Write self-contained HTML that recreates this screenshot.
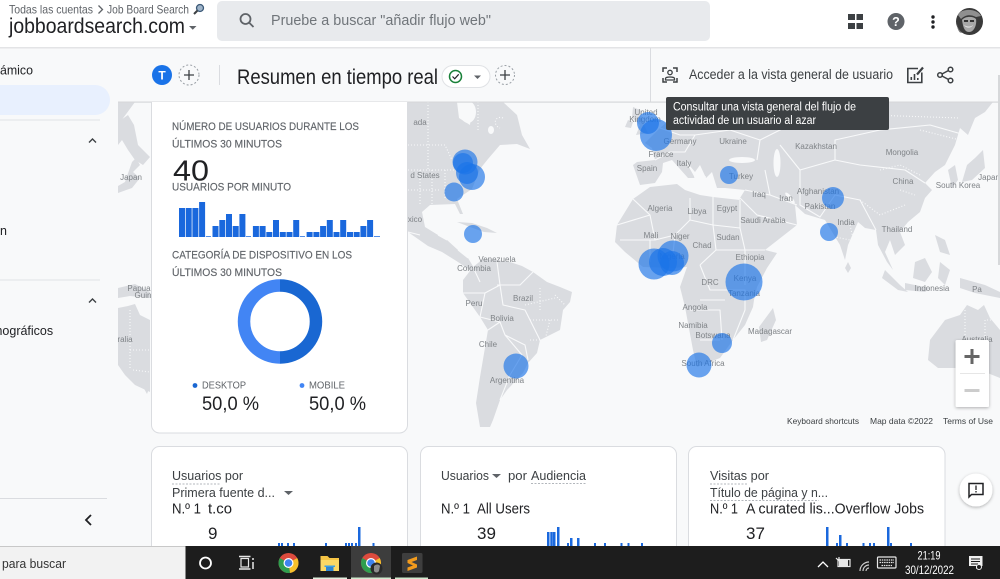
<!DOCTYPE html>
<html lang="es"><head><meta charset="utf-8"><title>Resumen en tiempo real</title>
<style>
html,body{margin:0;padding:0;width:1000px;height:579px;overflow:hidden;background:#f8f9fa}
svg{display:block}
text{font-family:"Liberation Sans",sans-serif}
.m text{font-size:8px;fill:#7f8387;text-anchor:middle}
.h{font-size:11px;fill:#5f6368;stroke:#5f6368;stroke-width:.15}
.d{fill:#202124}
</style></head><body>
<svg width="1000" height="579" viewBox="0 0 1000 579" xmlns="http://www.w3.org/2000/svg">
<defs>
<filter id="s" x="-30%" y="-30%" width="160%" height="160%"><feDropShadow dx="0" dy="1" stdDeviation="1.5" flood-color="#000" flood-opacity=".3"/></filter>
<clipPath id="mapc"><rect x="118" y="102" width="882" height="340"/></clipPath>
<clipPath id="cards"><rect x="0" y="440" width="1000" height="106"/></clipPath>
</defs>
<rect width="1000" height="579" fill="#f8f9fa"/>

<!-- MAP -->
<g clip-path="url(#mapc)">
<g fill="#dadce0">
<path d="M118 102H135L118 125Z"/>
<path d="M118 122L128 115 134 125 138 145 150 157 143 165 135 160 128 150 122 140 118 145Z"/>
<path d="M118 186L125 182 132 162 136 158 140 165 133 172 140 178 132 188 118 193Z"/>
<path d="M118 288L135 284 150 292V298L130 296 118 298Z"/>
<path d="M118 308L128 306 135 304 140 315 150 320V392L135 385 125 375 118 365Z"/>
<path d="M142 385L150 386 147 394Z"/>
<path d="M408 102H457L459 118 470 125 472 102H503L517 115 522 135 530 149 517 144 500 145 488 159 480 169 472 189 457 199 463 214 460 214 455 204 430 205 422 212 425 227 438 235 447 240 458 250 468 258 474 268 470 270 458 262 442 252 428 246 408 232Z"/>
<path d="M457 222L472 223 487 228 497 233 484 232 470 227Z"/>
<path d="M462 102H472L470 120 460 115Z" fill="#f8f9fa"/>
<path d="M463 280L473 267 483 259 497 260 510 262 522 266 533 272 547 282 560 287 572 292 570 302 563 310 560 330 540 340 537 353 528 363 523 373 507 390 500 400 493 420 490 427 480 427 476 403 480 377 488 330 480 317 463 293Z"/>
<path d="M617 225L633 199 650 187 677 184 685 190 700 195 713 197 740 200 753 227 765 250 777 253 767 268 757 287 754 300 753 307 745 325 733 340 720 358 697 367 693 350 685 307 680 287 687 267 672 268 643 267 625 252 615 242Z"/>
<path d="M773 308L776 320 767 340 761 342 759 327Z"/>
<path d="M633 165L637 162 655 160 652 148 645 143 660 128 672 118 685 112 680 102H993L985 112 975 118 968 135 960 128 955 145 945 165 935 172 925 183 932 190 925 198 920 212 908 222 900 232 905 245 895 255 890 240 885 252 893 270 887 262 878 245 876 230 865 228 858 222 848 245 845 260 840 245 825 220 805 214 795 205 797 225 765 250 757 253 748 235 738 210 740 198 745 190 725 188 717 188 712 172 706 178 700 165 695 172 685 160 695 178 688 178 672 160 663 163 662 172 655 183 640 185Z"/>
<path d="M633 107L640 110 644 125 648 133 636 135 640 125 632 118Z"/>
<path d="M628 120L633 122 631 128 625 127Z"/>
<path d="M967 165L975 158 983 150 985 168 972 180 962 182Z"/>
<path d="M948 170L955 165 958 180 952 188Z"/>
<path d="M897 205L900 210 897 222 893 215Z"/>
<path d="M848 262L851 268 848 273 845 268Z"/>
<path d="M885 270L900 285 908 292 898 290 882 278Z"/>
<path d="M905 283L930 288 925 292 905 290Z"/>
<path d="M915 262L925 258 932 272 925 282 913 278Z"/>
<path d="M940 262L950 270 945 285 938 278Z"/>
<path d="M935 235L945 240 950 255 940 252Z"/>
<path d="M960 278L985 285 1000 292 1000 298 975 293 960 288Z"/>
<path d="M930 340L945 320 960 315 967 305 978 310 984 305 990 318 1000 330V378L985 372 970 365 958 368 938 368 928 360Z"/>
</g>
<g fill="#f8f9fa">
<ellipse cx="742" cy="160" rx="13" ry="3"/>
<ellipse cx="777" cy="163" rx="3.500" ry="14"/>
<ellipse cx="700" cy="177" rx="6" ry="2"/>
<ellipse cx="790" cy="198" rx="2" ry="7" transform="rotate(-40 790 198)"/>
<ellipse cx="468" cy="112" rx="8" ry="11"/>
<ellipse cx="491" cy="130" rx="3" ry="4"/>
</g>
<g fill="none" stroke="#f8f9fa" stroke-width="1.100" stroke-linejoin="round">
<path d="M633 199L650 215 655 240 675 235 690 220 690 198M690 220L713 225 740 228 740 200M713 197V225M713 225L716 250 700 265M716 250H745L765 250M740 228L745 250 745 285M700 265L710 290 745 290 745 310 733 340M700 300H725M690 310H720L722 340M700 340H720M617 225L650 215M620 240L655 240M650 240L650 262M675 235L672 262"/>
<path d="M488 330L500 322 505 335 525 345 528 360M480 317L485 293 500 285 497 262M497 285L520 285 533 272M480 317L500 322M500 285L503 305 525 310 540 340M505 335L522 355 510 375 500 400M463 293L485 293M473 267L480 282"/>
<path d="M655 160L670 152 685 152 695 135 730 130 760 140 790 125 840 125 880 130 930 125 965 135M760 140L757 160M780 145L800 170 835 160 860 165 905 170 925 183M835 160L835 140 880 130M800 170L800 205 820 217 835 195 860 200 876 230M745 190L770 195 797 205M770 195L765 170M740 198L757 215 797 225M660 128L680 135 695 135"/>
<path d="M438 235L447 240M408 232L420 235M458 250L468 258"/>
</g>
<g fill="none" stroke="#f8f9fa" stroke-width="1.100" stroke-dasharray="1 2">
<path d="M408 170H455M428 102V170M478 102V130M408 145H445L452 160M408 190H440M432 170V205M420 170V205M445 170V200M503 118C495 115 492 125 500 128"/>
<path d="M540 288V310M525 305L555 298M530 320H560M550 320L545 340M555 295L565 305M530 340H555"/>
<path d="M850 225L858 260M825 235L850 240M880 170L900 165 920 175M900 190L915 195M860 200L880 215 905 205M920 130L960 140M870 115L960 118M1000 320L985 320V360M965 310V360"/>
<path d="M130 310V370M130 350H150M133 370L150 372"/>
</g>
<g class="m">
<text x="131" y="180">Japan</text><text x="139" y="291">Papua</text><text x="143" y="298">Guin</text><text x="125" y="342">ralia</text>
<text x="420" y="125">ada</text><text x="425" y="178">d States</text><text x="415" y="222">xico</text><text x="497" y="262">Venezuela</text><text x="474" y="271">Colombia</text>
<text x="474" y="306">Peru</text><text x="523" y="301">Brazil</text><text x="502" y="321">Bolivia</text><text x="488" y="347">Chile</text><text x="507" y="383">Argentina</text>
<text x="646" y="115">United</text><text x="645" y="122">Kingdom</text><text x="680" y="144">Germany</text><text x="661" y="157">France</text><text x="647" y="171">Spain</text><text x="684" y="166">Italy</text>
<text x="733" y="144">Ukraine</text><text x="816" y="149">Kazakhstan</text><text x="902" y="155">Mongolia</text><text x="741" y="179">Turkey</text><text x="903" y="184">China</text><text x="958" y="188">South Korea</text><text x="989" y="180">Japan</text>
<text x="759" y="197">Iraq</text><text x="786" y="201">Iran</text><text x="818" y="194">Afghanistan</text><text x="820" y="209">Pakistan</text><text x="846" y="225">India</text><text x="897" y="232">Thailand</text>
<text x="660" y="211">Algeria</text><text x="697" y="214">Libya</text><text x="727" y="211">Egypt</text><text x="763" y="223">Saudi Arabia</text><text x="651" y="238">Mali</text><text x="680" y="239">Niger</text><text x="702" y="248">Chad</text><text x="728" y="240">Sudan</text>
<text x="672" y="259">Nigeria</text><text x="750" y="260">Ethiopia</text><text x="710" y="285">DRC</text><text x="745" y="281">Kenya</text><text x="744" y="296">Tanzania</text>
<text x="695" y="310">Angola</text><text x="693" y="328">Namibia</text><text x="713" y="338">Botswana</text><text x="703" y="366">South Africa</text><text x="770" y="334">Madagascar</text><text x="932" y="291">Indonesia</text><text x="977" y="292">Pa</text><text x="977" y="342">Australia</text>
</g>
<g fill="#1a73e8" fill-opacity=".65">
<circle cx="465" cy="162" r="12.500"/><circle cx="463" cy="163" r="10"/><circle cx="467" cy="173" r="11"/><circle cx="472" cy="177" r="13"/><circle cx="454" cy="192" r="9.500"/><circle cx="473" cy="234" r="9"/>
<circle cx="648" cy="123" r="11"/><circle cx="656" cy="135" r="16"/><circle cx="729" cy="175" r="9"/><circle cx="833" cy="198" r="11"/><circle cx="829" cy="232" r="9"/>
<circle cx="673" cy="256" r="15.500"/><circle cx="672" cy="263" r="12"/><circle cx="654" cy="264" r="15.500"/><circle cx="663" cy="262" r="14"/><circle cx="744" cy="282" r="18.500"/>
<circle cx="516" cy="366" r="12.500"/><circle cx="699" cy="365" r="12.500"/><circle cx="722" cy="343" r="10"/>
</g>
</g>
<rect x="784" y="416" width="216" height="13" fill="#f8f9fa" fill-opacity=".8"/>
<g font-size="8.500" fill="#3c4043">
<text x="787" y="424" textLength="72" lengthAdjust="spacingAndGlyphs">Keyboard shortcuts</text>
<text x="870" y="424" textLength="63" lengthAdjust="spacingAndGlyphs">Map data ©2022</text>
<text x="943" y="424" textLength="50" lengthAdjust="spacingAndGlyphs">Terms of Use</text>
</g>
<rect x="955.500" y="340" width="33.500" height="67" rx="1.500" fill="#fff" filter="url(#s)"/>
<rect x="960" y="373" width="25" height="1" fill="#e6e6e6"/>
<path d="M964.500 356.500h15M972 349v15" stroke="#666" stroke-width="3"/>
<path d="M964.500 390.500h15" stroke="#ccc" stroke-width="3"/>

<!-- SIDEBAR -->
<rect x="0" y="48" width="118" height="498" fill="#f8f9fa"/>
<path d="M0 85H95A15 15 0 0 1 95 115H0Z" fill="#e8f0fe"/>
<rect x="0" y="119.500" width="100" height="1" fill="#e1e3e6"/>
<rect x="0" y="279.500" width="100" height="1" fill="#e1e3e6"/>
<rect x="0" y="498" width="107" height="1" fill="#dadce0"/>
<text x="0" y="74.500" font-size="12.500" class="d" textLength="33" lengthAdjust="spacingAndGlyphs">ámico</text>
<text x="-7" y="235" font-size="12.500" class="d">en</text>
<text x="-8" y="335" font-size="12.500" class="d">mográficos</text>
<path d="M89 142.500l3.500-3.500 3.500 3.500M89 302.500l3.500-3.500 3.500 3.500" fill="none" stroke="#3c4043" stroke-width="1.400"/>
<path d="M91 515l-5 5 5 5" fill="none" stroke="#202124" stroke-width="1.800"/>

<!-- HEADER -->
<rect width="1000" height="47" fill="#fff"/>
<rect y="47" width="1000" height="1.500" fill="#e3e4e6"/>
<text x="9" y="13.500" font-size="12" fill="#5f6368" textLength="84" lengthAdjust="spacingAndGlyphs">Todas las cuentas</text>
<path d="M98.500 5.500l4 4-4 4" fill="none" stroke="#5f6368" stroke-width="1.300"/>
<text x="107" y="13.500" font-size="12" fill="#5f6368" textLength="82" lengthAdjust="spacingAndGlyphs">Job Board Search</text>
<circle cx="200" cy="8" r="3.500" fill="#9fb4c9" stroke="#3c5a78" stroke-width="1.300"/><path d="M197.500 10.500l-3.500 3.500" stroke="#3c4043" stroke-width="2"/>
<text x="9" y="33" font-size="21" class="d" textLength="176" lengthAdjust="spacingAndGlyphs">jobboardsearch.com</text>
<path d="M189 26h7.500l-3.750 3.800z" fill="#5f6368"/>
<rect x="217" y="1" width="493" height="40" rx="5" fill="#e8eaed"/>
<circle cx="245.500" cy="19" r="5" fill="none" stroke="#5f6368" stroke-width="1.800"/><path d="M249 22.500l4.500 4.500" stroke="#5f6368" stroke-width="1.800"/>
<text x="271" y="25" font-size="14.500" fill="#70757a" textLength="220" lengthAdjust="spacingAndGlyphs">Pruebe a buscar "añadir flujo web"</text>
<g fill="#3c4043"><rect x="848" y="14" width="7" height="6"/><rect x="856.500" y="14" width="6.500" height="6"/><rect x="848" y="23" width="7" height="6"/><rect x="856.500" y="23" width="6.500" height="6"/></g>
<circle cx="896" cy="21.500" r="8.500" fill="#5f6368"/>
<text x="896" y="26" font-size="12.500" font-weight="bold" fill="#fff" text-anchor="middle">?</text>
<g fill="#202124"><circle cx="933" cy="17" r="1.700"/><circle cx="933" cy="22" r="1.700"/><circle cx="933" cy="27" r="1.700"/></g>
<circle cx="969.500" cy="21.500" r="13.500" fill="#3a3a3a"/>
<path d="M958 15C961 8 977 8 981 16L976 17C970 14 965 15 961 19Z" fill="#8f8f8f"/>
<path d="M962 20C965 16 973 16 976 19 977 25 974 32 969 32 964 32 963 26 962 20Z" fill="#a8a8a8"/>
<path d="M964 25c3 2 7 2 9 0-1 3-7 4-9 0Z" fill="#e0e0e0"/>
<path d="M964 20h4v2h-4zM970 20h4v2h-4z" fill="#333"/>
<path d="M957 24c1 5 3 7 6 9l-3-.5c-2-2-3-5-3-8.500Z" fill="#777"/>

<!-- SUBHEADER -->
<circle cx="162" cy="75" r="10" fill="#1a73e8"/>
<text x="162" y="79.500" font-size="12" font-weight="bold" fill="#fff" text-anchor="middle">T</text>
<circle cx="189" cy="75" r="10" fill="none" stroke="#9aa0a6" stroke-dasharray="2 2"/>
<path d="M184 75h10M189 70v10" stroke="#3c4043" stroke-width="1.300"/>
<rect x="219" y="65" width="1" height="20" fill="#dadce0"/>
<text x="237" y="84" font-size="21" class="d" textLength="201" lengthAdjust="spacingAndGlyphs">Resumen en tiempo real</text>
<rect x="442" y="65.500" width="48" height="22" rx="11" fill="#fff" stroke="#e0e2e5"/>
<circle cx="455.500" cy="76.500" r="6" fill="none" stroke="#188038" stroke-width="1.500"/>
<path d="M452.500 76.500l2.200 2.300 4-4.500" fill="none" stroke="#202124" stroke-width="1.200"/>
<path d="M474 75.500h7l-3.500 3.500z" fill="#5f6368"/>
<circle cx="505" cy="75" r="9.500" fill="none" stroke="#9aa0a6" stroke-dasharray="2 2"/>
<path d="M500 75h10M505 70v10" stroke="#3c4043" stroke-width="1.300"/>
<rect x="650" y="48" width="1" height="54" fill="#dadce0"/>
<rect x="118" y="101.500" width="882" height="1.200" fill="#d6d8da"/>
<g fill="none" stroke="#3c4043" stroke-width="1.300">
<path d="M663 72v-4h4M673 68h4v4M663 78v4h4M673 82h4v-4" stroke-width="1.500"/>
<circle cx="670" cy="72.500" r="2.200"/>
<path d="M665.500 80v-1.500c0-2 9-2 9 0V80Z"/>
</g>
<text x="689" y="79" font-size="13.500" fill="#3c4043" textLength="204" lengthAdjust="spacingAndGlyphs">Acceder a la vista general de usuario</text>
<g fill="none" stroke="#3c4043" stroke-width="1.600">
<path d="M918 68.500h-10.200v14h14v-10"/>
<path d="M917 74.500l6-7" stroke-width="2.200"/>
</g>
<path d="M910.500 80h1.600v-3h-1.600zM913.700 80h1.600v-6h-1.600zM917 80h1.600v-2h-1.600z" fill="#3c4043"/>
<g fill="none" stroke="#3c4043" stroke-width="1.500">
<circle cx="950.500" cy="69.500" r="2.300"/><circle cx="940" cy="75" r="2.300"/><circle cx="950.500" cy="80.500" r="2.300"/>
<path d="M942 74l6.500-3.500M942 76l6.500 3.500"/>
</g>

<!-- MAIN CARD -->
<path d="M151.500 102V425a8 8 0 0 0 8 8H399.500a8 8 0 0 0 8-8V102" fill="#fff" stroke="#dadce0"/>
<text class="h" x="172" y="130" textLength="187" lengthAdjust="spacingAndGlyphs">NÚMERO DE USUARIOS DURANTE LOS</text>
<text class="h" x="172" y="147.500" textLength="110" lengthAdjust="spacingAndGlyphs">ÚLTIMOS 30 MINUTOS</text>
<text x="173" y="180.500" font-size="29" class="d" textLength="36" lengthAdjust="spacingAndGlyphs">40</text>
<text class="h" x="172" y="190.500" textLength="119" lengthAdjust="spacingAndGlyphs">USUARIOS POR MINUTO</text>
<path fill="#1a68dd" d="M179 208h6v29h-6zM185.700 208h6v29h-6zM192.400 208h6v29h-6zM199.100 202h6v35h-6zM205.900 236.300h5v.7h-5zM212.500 226h6v11h-6zM219.300 220h6v17h-6zM226 214h6v23h-6zM232.700 226h6v11h-6zM239.400 214h6v23h-6zM246 236.300h5v.7h-5zM252.900 226h6v11h-6zM259.600 226h6v11h-6zM266.300 232h6v5h-6zM273 220h6v17h-6zM279.800 232h6v5h-6zM286.500 232h6v5h-6zM293.200 220h6v17h-6zM300 236.300h5v.7h-5zM306.600 232h6v5h-6zM313.400 232h6v5h-6zM320.100 226h6v11h-6zM326.800 220h6v17h-6zM333.500 232h6v5h-6zM340.200 220h6v17h-6zM347 232h6v5h-6zM353.700 232h6v5h-6zM360.400 226h6v11h-6zM367.100 220h6v17h-6zM374 236.300h6v.7h-6z"/>
<text class="h" x="172" y="258.500" textLength="180" lengthAdjust="spacingAndGlyphs">CATEGORÍA DE DISPOSITIVO EN LOS</text>
<text class="h" x="172" y="276" textLength="110" lengthAdjust="spacingAndGlyphs">ÚLTIMOS 30 MINUTOS</text>
<path d="M280 285.500a36 36 0 0 1 0 72" fill="none" stroke="#1967d2" stroke-width="12.500"/>
<path d="M280 357.500a36 36 0 0 1 0-72" fill="none" stroke="#4285f4" stroke-width="12.500"/>
<circle cx="195" cy="385.500" r="2.400" fill="#1967d2"/>
<text x="202" y="388.500" font-size="10" fill="#5f6368" textLength="44" lengthAdjust="spacingAndGlyphs">DESKTOP</text>
<circle cx="302" cy="385.500" r="2.400" fill="#4285f4"/>
<text x="309" y="388.500" font-size="10" fill="#5f6368" textLength="36" lengthAdjust="spacingAndGlyphs">MOBILE</text>
<text x="202" y="410" font-size="19" class="d" textLength="57" lengthAdjust="spacingAndGlyphs">50,0 %</text>
<text x="309" y="410" font-size="19" class="d" textLength="57" lengthAdjust="spacingAndGlyphs">50,0 %</text>

<!-- BOTTOM CARDS -->
<g clip-path="url(#cards)">
<rect x="151.500" y="446.500" width="256" height="140" rx="8" fill="#fff" stroke="#dadce0"/>
<rect x="420.500" y="446.500" width="256" height="140" rx="8" fill="#fff" stroke="#dadce0"/>
<rect x="688.500" y="446.500" width="256.500" height="140" rx="8" fill="#fff" stroke="#dadce0"/>
<g font-size="13" fill="#3c4043">
<text x="172" y="480" textLength="71" lengthAdjust="spacingAndGlyphs">Usuarios por</text>
<text x="172" y="497" textLength="103" lengthAdjust="spacingAndGlyphs">Primera fuente d...</text>
<text x="441" y="480" textLength="48" lengthAdjust="spacingAndGlyphs">Usuarios</text>
<text x="508" y="480" textLength="19" lengthAdjust="spacingAndGlyphs">por</text>
<text x="531" y="480" textLength="55" lengthAdjust="spacingAndGlyphs">Audiencia</text>
<text x="710" y="480" textLength="59" lengthAdjust="spacingAndGlyphs">Visitas por</text>
<text x="710" y="497" textLength="118" lengthAdjust="spacingAndGlyphs">Título de página y n...</text>
</g>
<g stroke="#9aa0a6" stroke-dasharray="2 1.500" stroke-width=".8">
<path d="M172 484h49M531 483.500h55M710 484h37M710 500.500h109"/>
</g>
<path d="M284 491h9l-4.500 4zM492 474h9l-4.500 4z" fill="#5f6368"/>
<g font-size="14.500" class="d">
<text x="172" y="513.500" textLength="29" lengthAdjust="spacingAndGlyphs">N.º 1</text>
<text x="208" y="513.500" textLength="24" lengthAdjust="spacingAndGlyphs">t.co</text>
<text x="441" y="513.500" textLength="29" lengthAdjust="spacingAndGlyphs">N.º 1</text>
<text x="477" y="513.500" textLength="53" lengthAdjust="spacingAndGlyphs">All Users</text>
<text x="710" y="513.500" textLength="28" lengthAdjust="spacingAndGlyphs">N.º 1</text>
<text x="746" y="513.500" textLength="178" lengthAdjust="spacingAndGlyphs">A curated lis...Overflow Jobs</text>
</g>
<g font-size="17" class="d">
<text x="208" y="539">9</text>
<text x="477" y="539">39</text>
<text x="746" y="539">37</text>
</g>
<path fill="#1a68dd" d="M278 543h2v3h-2zM281 543h2v3h-2zM287 543h2v3h-2zM293 543h2v3h-2zM325 543h2v3h-2zM345 543h2v3h-2zM348 543h2v3h-2zM351 543h2v3h-2zM355 543h2v3h-2zM358 527h2.500v19h-2.500zM372.500 543h2v3h-2z"/>
<path fill="#1a68dd" d="M547 532h2.500v14h-2.500zM550.300 532h2.500v14h-2.500zM553 532h2.500v14h-2.500zM557 527h2.500v19h-2.500zM567 543h2v3h-2zM570 538h2.500v8h-2.500zM577 538h2.500v8h-2.500zM594 543h2v3h-2zM604 543h2v3h-2zM620.500 543h2v3h-2zM627.500 543h2v3h-2zM641 543h2v3h-2z"/>
<path fill="#1a68dd" d="M826 527h2.500v19h-2.500zM836 543h2v3h-2zM839 535h2.500v11h-2.500zM846 543h2v3h-2zM862.500 543h2v3h-2zM869 543h2v3h-2zM873 543h2v3h-2zM887 527h2.500v19h-2.500zM890 543h2v3h-2zM910 543h2v3h-2z"/>
</g>

<!-- tooltip -->
<rect x="666" y="97" width="223" height="33" rx="2" fill="#3c4043"/>
<g font-size="11.500" fill="#fff">
<text x="673" y="110.500" textLength="183" lengthAdjust="spacingAndGlyphs">Consultar una vista general del flujo de</text>
<text x="673" y="124" textLength="143" lengthAdjust="spacingAndGlyphs">actividad de un usuario al azar</text>
</g>

<rect x="998" y="75" width="2" height="190" fill="#d6d8da"/>

<!-- feedback -->
<circle cx="976" cy="490" r="16.500" fill="#fff" filter="url(#s)"/>
<path d="M969 483.500h14v11h-11.500l-2.500 2.500Z" fill="none" stroke="#202124" stroke-width="1.500"/>
<path d="M976 485.500v4.500M976 491v1.500" stroke="#202124" stroke-width="1.300"/>

<!-- TASKBAR -->
<rect y="546" width="1000" height="33" fill="#1d1d1d"/>
<rect y="546" width="185.500" height="33" fill="#f2f2f2"/>
<rect y="546" width="185.500" height="1" fill="#c8c8c8"/>
<text x="2" y="568" font-size="13" fill="#333" textLength="64" lengthAdjust="spacingAndGlyphs">para buscar</text>
<circle cx="205.500" cy="563" r="5.500" fill="none" stroke="#fff" stroke-width="1.800"/>
<g fill="none" stroke="#e8e8e8" stroke-width="1.200"><rect x="241" y="558.500" width="7.500" height="8.500"/><path d="M239 556.500h11.500M239 569h11.500M253 558v2M253 562v7" stroke-width="1.500"/></g>
<circle cx="288.500" cy="563" r="10" fill="#dd4b3e"/>
<path d="M288.500 563L297.200 558A10 10 0 0 1 290 572.900Z" fill="#f6c02c"/>
<path d="M288.500 563L290 572.900A10 10 0 0 1 279.800 558Z" fill="#2e9e4f"/>
<circle cx="288.500" cy="563" r="5" fill="#fff"/><circle cx="288.500" cy="563" r="3.800" fill="#3f84ee"/>
<path d="M320.500 556h7l2 2h9.500v13h-18.500Z" fill="#f5c445"/>
<rect x="320.500" y="560" width="18.500" height="11" fill="#fbd865"/>
<path d="M326 571v-5h7.500v5Z" fill="#2f86d2"/><path d="M324.500 565.500h10.500v1.500h-10.500Z" fill="#3aa0e6"/>
<rect x="351" y="546" width="40" height="33" fill="#3d3d3d"/>
<circle cx="371" cy="563" r="10" fill="#dd4b3e"/>
<path d="M371 563L379.700 558A10 10 0 0 1 372.500 572.900Z" fill="#f6c02c"/>
<path d="M371 563L372.500 572.900A10 10 0 0 1 362.300 558Z" fill="#2e9e4f"/>
<circle cx="371" cy="563" r="5" fill="#fff"/><circle cx="371" cy="563" r="3.800" fill="#3f84ee"/>
<circle cx="376.500" cy="568.500" r="6" fill="#2a2a2a"/><path d="M374 566c2-2 5-2 6 0l-1 5c-1 2-4 2-5 0Z" fill="#8c8c8c"/>
<rect x="402" y="553" width="20.500" height="20" rx="1.500" fill="#3e3e3e"/>
<path d="M407.500 560L417 556.500V560L411.500 562 417 564.500V567.500L407.500 571V567.500L413 565.500 407.500 563Z" fill="#f29b1d"/>
<rect x="313" y="577.500" width="34" height="1.500" fill="#dfeedd"/>
<rect x="351" y="577.500" width="40" height="1.500" fill="#cfe9cd"/>
<rect x="395" y="577.500" width="33" height="1.500" fill="#cfe9cd"/>
<path d="M818 567l5-5 5 5" fill="none" stroke="#fff" stroke-width="1.300"/>
<rect x="839" y="560" width="9" height="6" fill="#e8e8e8"/>
<g fill="none" stroke="#e8e8e8" stroke-width="1.200">
<rect x="838" y="559.500" width="12" height="7"/>
<path d="M836 558l3 3M839 557v3"/>
<path d="M860 571a9 9 0 0 1 9-9M863 571a6 6 0 0 1 6-6M866 571a3 3 0 0 1 3-3" stroke="#cfcfcf"/>
<rect x="877.500" y="557" width="18.500" height="11" rx="1"/>
<path d="M879.500 560h14.500M879.500 562.500h14.500M881.500 565.500h10.500" stroke-dasharray="1.500 .8"/>
</g>
<text x="929" y="559.500" font-size="12" fill="#fff" text-anchor="middle" textLength="23" lengthAdjust="spacingAndGlyphs">21:19</text>
<text x="929.500" y="574" font-size="12" fill="#fff" text-anchor="middle" textLength="49" lengthAdjust="spacingAndGlyphs">30/12/2022</text>
<path d="M969 556h13.500v10h-3.500l-3 3v-3h-7Z" fill="#f0f0f0"/>
<path d="M971 559h9M971 561.500h9M971 564h7" stroke="#1d1d1d" stroke-width=".9"/>
<circle cx="979" cy="567" r="2.500" fill="#1d1d1d" stroke="#f0f0f0"/>
</svg>
</body></html>
